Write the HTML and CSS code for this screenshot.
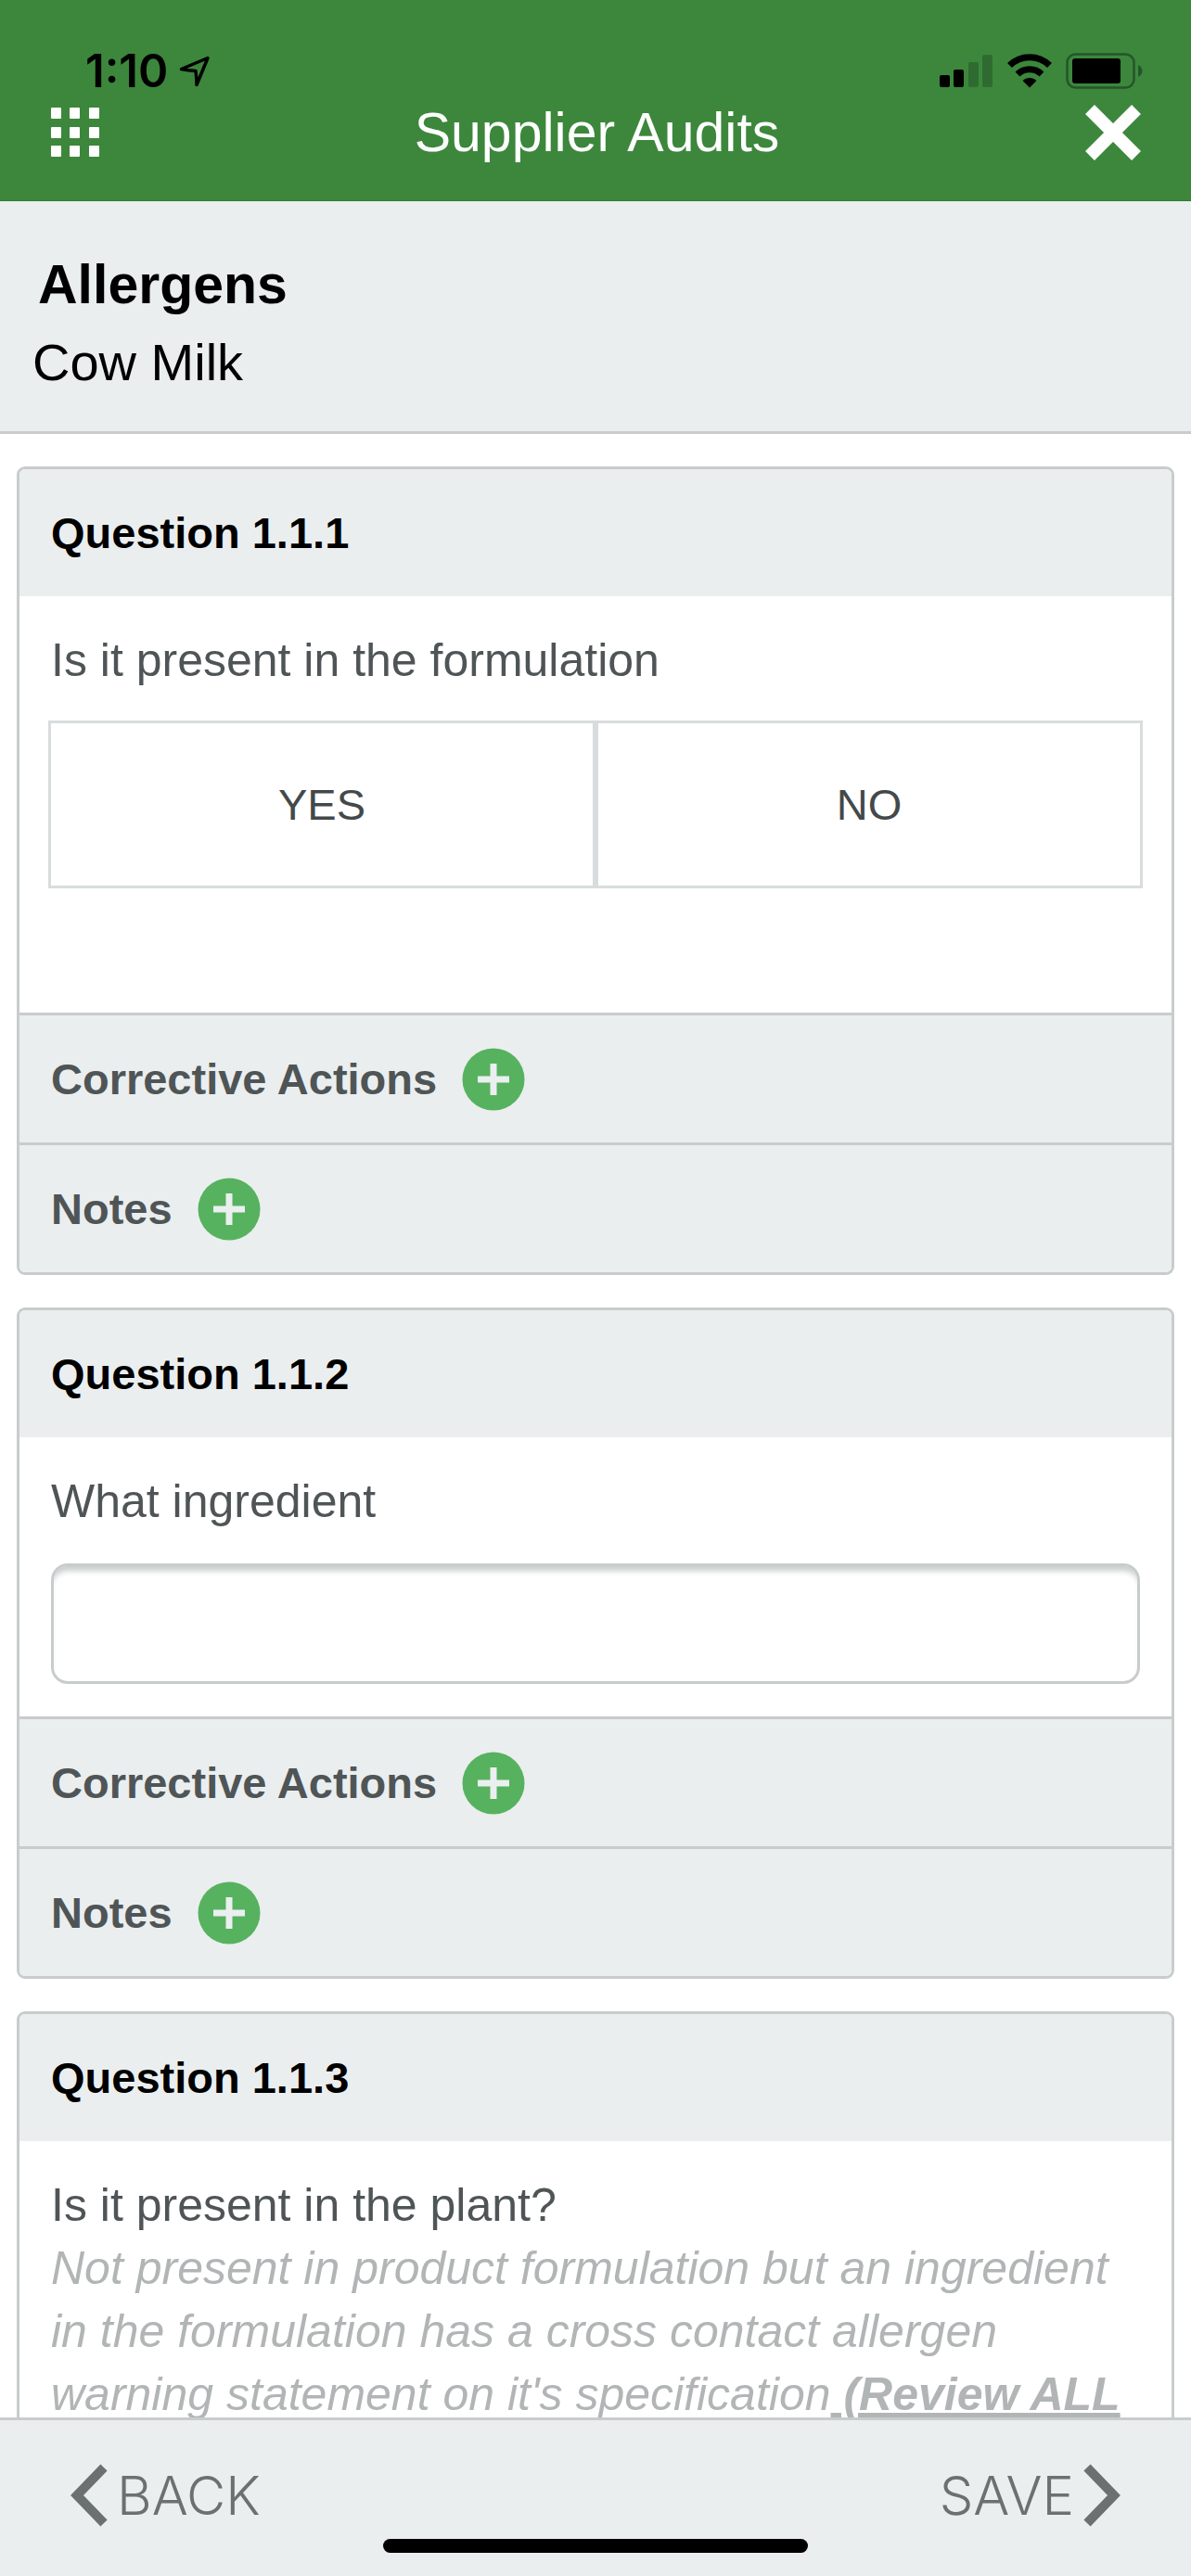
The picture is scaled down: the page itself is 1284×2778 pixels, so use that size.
FILE: index.html
```html
<!DOCTYPE html>
<html lang="en">
<head>
<meta charset="utf-8">
<meta name="viewport" content="width=device-width, initial-scale=1">
<title>Supplier Audits</title>
<link rel="stylesheet" href="styles.css">
</head>
<body>
<svg width="0" height="0" class="defs" aria-hidden="true">
  <symbol id="add" viewBox="0 0 68 68">
    <circle cx="34" cy="34" r="33.5" fill="#56b25e"/>
    <path d="M34 17v34M17 34h34" stroke="#ebeff0" stroke-width="7"/>
  </symbol>
</svg>
<div class="app">
  <header class="header">
    <div class="status">
      <div class="status-left">
        <span class="clock">1:10</span>
        <svg width="34" height="34" viewBox="0 0 34 34" aria-hidden="true"><path d="M31 2.500 2.500 14.500Q10 16 18 16.500 19 24 19 31.500Z" fill="none" stroke="#000" stroke-width="3.500" stroke-linejoin="round"/></svg>
      </div>
      <div class="status-right">
        <svg width="58" height="39" viewBox="0 0 58 39" aria-hidden="true">
          <rect x="0" y="24" width="11" height="13" rx="2"/>
          <rect x="15" y="18" width="11" height="19" rx="2"/>
          <rect x="31" y="10" width="11" height="27" rx="2" fill="#2f6b31"/>
          <rect x="46" y="2" width="11" height="35" rx="2" fill="#2f6b31"/>
        </svg>
        <svg width="50" height="39" viewBox="0 0 50 39" aria-hidden="true">
          <path d="M3.500 13.500a30.500 30.500 0 0 1 43 0" fill="none" stroke="#000" stroke-width="7"/>
          <path d="M12 23a18.500 18.500 0 0 1 26 0" fill="none" stroke="#000" stroke-width="7"/>
          <path d="M25 37.500l-7.500-7.500a10.600 10.600 0 0 1 15 0Z"/>
        </svg>
        <svg width="83" height="39" viewBox="0 0 83 39" aria-hidden="true">
          <rect x="1.500" y="1.500" width="72" height="36" rx="9" fill="none" stroke="#25552a" stroke-width="2.500"/>
          <rect x="7" y="6" width="52" height="27" rx="3"/>
          <path d="M78 13c6 3 6 10 0 13Z" fill="#25552a"/>
        </svg>
      </div>
    </div>
    <div class="nav">
      <button class="icon-button" type="button" aria-label="Menu">
        <svg width="52" height="54" viewBox="0 0 52 54" fill="#fff">
          <rect x="0" y="0" width="11" height="12" rx="1"/><rect x="20" y="0" width="11" height="12" rx="1"/><rect x="41" y="0" width="11" height="12" rx="1"/>
          <rect x="0" y="21" width="11" height="12" rx="1"/><rect x="20" y="21" width="11" height="12" rx="1"/><rect x="41" y="21" width="11" height="12" rx="1"/>
          <rect x="0" y="41" width="11" height="12" rx="1"/><rect x="20" y="41" width="11" height="12" rx="1"/><rect x="41" y="41" width="11" height="12" rx="1"/>
        </svg>
      </button>
      <h1 class="title">Supplier Audits</h1>
      <button class="icon-button close" type="button" aria-label="Close">
        <svg width="64" height="62" viewBox="0 0 64 62"><path d="M7 6 57 56M57 6 7 56" stroke="#fff" stroke-width="14"/></svg>
      </button>
    </div>
  </header>

  <section class="subject">
    <h2 class="subject-title">Allergens</h2>
    <p class="subject-name">Cow Milk</p>
  </section>

  <main class="questions">
    <article class="card">
      <h3 class="card-head">Question 1.1.1</h3>
      <div class="card-body choice-body">
        <p class="prompt" id="q1">Is it present in the formulation</p>
        <div class="choices" role="group" aria-labelledby="q1">
          <button class="choice" type="button">YES</button>
          <button class="choice" type="button">NO</button>
        </div>
      </div>
      <div class="row">
        <span>Corrective Actions</span>
        <button class="icon-button" type="button" aria-label="Add corrective action"><svg width="68" height="68"><use href="#add"/></svg></button>
      </div>
      <div class="row">
        <span>Notes</span>
        <button class="icon-button" type="button" aria-label="Add note"><svg width="68" height="68"><use href="#add"/></svg></button>
      </div>
    </article>

    <article class="card">
      <h3 class="card-head">Question 1.1.2</h3>
      <div class="card-body">
        <label class="prompt" for="ingredient">What ingredient</label>
        <input class="field" id="ingredient" type="text">
      </div>
      <div class="row">
        <span>Corrective Actions</span>
        <button class="icon-button" type="button" aria-label="Add corrective action"><svg width="68" height="68"><use href="#add"/></svg></button>
      </div>
      <div class="row">
        <span>Notes</span>
        <button class="icon-button" type="button" aria-label="Add note"><svg width="68" height="68"><use href="#add"/></svg></button>
      </div>
    </article>

    <article class="card">
      <h3 class="card-head">Question 1.1.3</h3>
      <div class="card-body">
        <p class="prompt">Is it present in the plant?</p>
        <p class="prompt hint">Not present in product formulation but an ingredient in the formulation has a cross contact allergen warning statement on it's specification<strong class="review"> (Review ALL</strong></p>
      </div>
    </article>
  </main>

  <footer class="footer">
    <div class="actions">
      <button class="step" type="button">
        <svg width="41" height="68" viewBox="0 0 41 68" aria-hidden="true"><path d="M36 4 7 34l29 30" fill="none" stroke="#6b7071" stroke-width="10"/></svg>
        BACK
      </button>
      <button class="step" type="button">
        SAVE
        <svg width="41" height="68" viewBox="0 0 41 68" aria-hidden="true"><path d="M5 4l29 30L5 64" fill="none" stroke="#6b7071" stroke-width="10"/></svg>
      </button>
    </div>
    <div class="home-bar"></div>
  </footer>
</div>
</body>
</html>
```
FILE: styles.css
```css
* {
  box-sizing: border-box;
}

body {
  margin: 0;
  background: #fff;
  color: #000;
  font-family: "Liberation Sans", Arial, sans-serif;
}

h1, h2, h3, p {
  margin: 0;
}

button {
  padding: 0;
  border: 0;
  background: none;
  font-family: inherit;
}

svg {
  display: block;
}

.defs {
  position: absolute;
}

.app {
  display: flex;
  flex-direction: column;
  height: 100vh;
}

/* Header with the device status line */
.header {
  display: flex;
  flex-direction: column;
  gap: 15px;
  padding: 57px 52px 43px 55px;
  border-bottom: 1px solid #2f7d31;
  background: #3c873c;
}

.status {
  display: flex;
  justify-content: space-between;
  align-items: center;
  height: 39px;
  padding-left: 37px;
}

.status-left {
  display: flex;
  align-items: center;
  gap: 12px;
}

.status-right {
  display: flex;
  align-items: center;
  gap: 14px;
}

.clock {
  font: 600 49px/39px Inter, sans-serif;
}

.nav {
  display: grid;
  grid-template-columns: 1fr auto 1fr;
  align-items: center;
  height: 62px;
}

.icon-button {
  justify-self: start;
}

.close {
  justify-self: end;
}

.title {
  color: #fff;
  font-size: 59px;
  font-weight: 400;
  line-height: 64px;
}

/* Audit subject */
.subject {
  display: flex;
  flex-direction: column;
  gap: 12px;
  padding: 54px 35px 38px;
  border-bottom: 3px solid #c8cccd;
  background: #eaeeef;
}

.subject-title {
  padding-left: 6px;
  font-size: 59px;
  line-height: 72px;
}

.subject-name {
  font-size: 56px;
  line-height: 72px;
}

/* Question list */
.questions {
  display: flex;
  flex: 1;
  flex-direction: column;
  gap: 35px;
  min-height: 0;
  padding: 35px 18px;
  overflow-y: auto;
  scrollbar-width: none;
}

.card {
  flex: none;
  border: 3px solid #c8cccd;
  border-radius: 9px;
  overflow: hidden;
}

.card-head {
  padding: 0 34px;
  background: #eaeeef;
  font-size: 47px;
  line-height: 137px;
}

.card-body {
  padding: 35px 34px;
}

.choice-body {
  padding: 35px 31px 134px;
}

.prompt {
  display: block;
  color: #4f5556;
  font-size: 50px;
  line-height: 68px;
}

.choice-body .prompt {
  padding: 0 3px;
}

.hint {
  color: #b2b5b6;
  font-style: italic;
}

.review {
  text-decoration: underline;
}

.choices {
  display: grid;
  grid-template-columns: 1fr 1fr;
  margin-top: 31px;
}

.choice {
  height: 181px;
  border: 3px solid #d8dcdd;
  color: #43494a;
  font-size: 47px;
}

.field {
  display: block;
  width: 100%;
  height: 130px;
  margin-top: 33px;
  padding: 0 24px;
  border: 3px solid #c8cccd;
  border-radius: 18px;
  background: #fff;
  box-shadow: inset 0 9px 6px -4px #c8cccd;
  color: #4f5556;
  font: inherit;
  font-size: 50px;
}

.row {
  display: flex;
  align-items: center;
  gap: 27px;
  height: 140px;
  padding: 0 34px;
  border-top: 3px solid #c8cccd;
  background: #eaeeef;
  color: #4f5556;
  font-size: 47px;
  font-weight: 700;
}

/* Bottom bar */
.footer {
  padding: 47px 76px 25px;
  border-top: 3px solid #c8cccd;
  background: #eaeeef;
}

.actions {
  display: flex;
  justify-content: space-between;
}

.step {
  display: flex;
  align-items: center;
  gap: 9px;
  height: 68px;
  color: #6b7071;
  font: 300 58px/68px Inter, sans-serif;
}

.home-bar {
  width: 458px;
  height: 15px;
  margin: 13px auto 0;
  border-radius: 8px;
  background: #000;
}
```
